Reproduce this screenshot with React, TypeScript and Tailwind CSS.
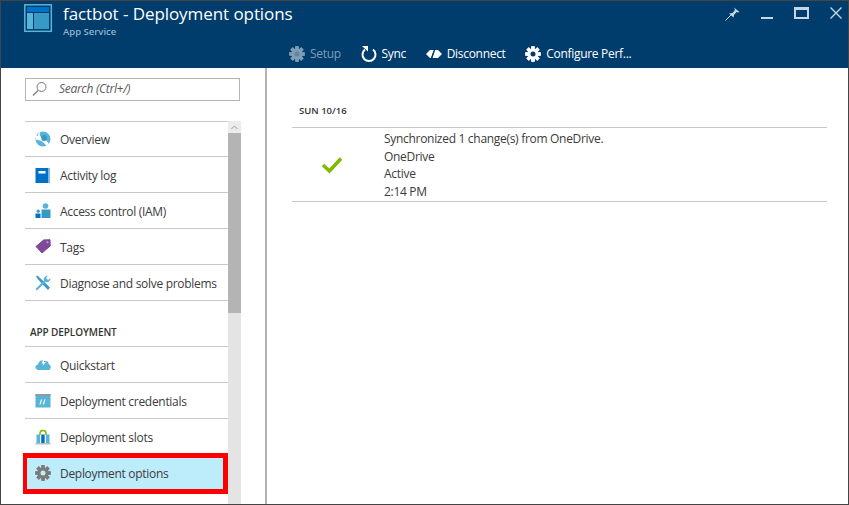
import type { ReactNode } from "react";

function Gear({ color, hole }: { color: string; hole: string }) {
  const teeth = [0, 45, 90, 135, 180, 225, 270, 315];
  return (
    <svg width="16" height="16" viewBox="0 0 16 16">
      {teeth.map((a) => (
        <rect key={a} x="6.300" y="0.300" width="3.400" height="15.400" fill={color} transform={`rotate(${a} 8 8)`} />
      ))}
      <circle cx="8" cy="8" r="5.600" fill={color} />
      <circle cx="8" cy="8" r="2.500" fill={hole} />
    </svg>
  );
}

const icons: Record<string, ReactNode> = {
  overview: (
    <svg width="16" height="16" viewBox="0 0 16 16">
      <circle cx="8" cy="8" r="7.500" fill="#59b4d9" />
      <path d="M0.500 5 C5 3.500 11 8 14 13 L11.500 15 C8.500 10.500 4 8 1 9Z" fill="#fff" />
      <circle cx="9" cy="7" r="3" fill="#3999c6" />
      <path d="M5.500 0.800 C4 4 5 6 7 8 L4 9.500 C2 7 2 3 5.500 0.800Z" fill="#fff" />
    </svg>
  ),
  log: (
    <svg width="16" height="16" viewBox="0 0 16 16">
      <rect x="0.500" y="1" width="14.500" height="15" fill="#0072c6" />
      <rect x="13" y="1" width="2" height="15" fill="#7fb9e3" />
      <rect x="3.500" y="4" width="7" height="2.500" fill="#fff" />
    </svg>
  ),
  iam: (
    <svg width="16" height="16" viewBox="0 0 16 16">
      <circle cx="10.500" cy="3" r="2.800" fill="#59b4d9" />
      <path d="M6.500 6.500 H15.500 V15 H6.500Z" fill="#3999c6" />
      <circle cx="3.200" cy="8.200" r="1.600" fill="#3999c6" />
      <path d="M0.500 10.500 H5.500 V15 H0.500Z" fill="#0072c6" />
    </svg>
  ),
  tags: (
    <svg width="16" height="16" viewBox="0 0 16 16">
      <path d="M8.500 1 L15 0.700 L15.200 7 L7 14 L1 7.500Z" fill="#804998" stroke="#804998" strokeLinejoin="round" />
      <circle cx="12.500" cy="3.200" r="1" fill="#c9a5d8" />
    </svg>
  ),
  wrench: (
    <svg width="16" height="16" viewBox="0 0 16 16">
      <path d="M1 1.500 L2.500 0.500 L5 3 L15 12.500 L13 15 L3.500 5 Z" fill="#3999c6" />
      <path d="M2 15.500 L0.500 14 L9.500 5 L11 6.500Z" fill="#59b4d9" />
      <path d="M9 6 C8 3.500 10 0.500 13 0.500 L11 3 L13 5 L15.500 3 C15.500 6 13 8 10.500 7Z" fill="#59b4d9" />
    </svg>
  ),
  cloud: (
    <svg width="16" height="16" viewBox="0 0 16 16">
      <path d="M3.500 13 C-0.500 13 -0.500 8 3 7.500 C3.500 4 7 2 10 4 C13 3.500 14 6 13.500 7 C16.800 8 16.500 13 13 13Z" fill="#59b4d9" />
      <path d="M9 1 L6.500 6.500 H8.500 L7.500 9 L11 5 H9Z" fill="#fff" />
    </svg>
  ),
  creds: (
    <svg width="16" height="16" viewBox="0 0 16 16">
      <rect x="0.500" y="1" width="15" height="13.500" fill="#59b4d9" />
      <rect x="0.500" y="1" width="15" height="2" fill="#8f9ba3" />
      <path d="M6 6.500 H7.200 L5.600 11.500 H4.400Z M9.300 6.500 H10.500 L8.900 11.500 H7.700Z" fill="#fff" />
    </svg>
  ),
  slots: (
    <svg width="16" height="16" viewBox="0 0 16 16">
      <path d="M5 6 V4 C5 0.500 11 0.500 11 4 V6" fill="none" stroke="#7fba00" strokeWidth="1.500" />
      <rect x="1.500" y="5.500" width="3.500" height="8.500" fill="#59b4d9" />
      <rect x="6.200" y="5.500" width="3.500" height="8.500" fill="#0072c6" />
      <rect x="11" y="5.500" width="3.500" height="8.500" fill="#59b4d9" />
      <rect x="0.500" y="14" width="15" height="1.500" fill="#b8bcbf" />
    </svg>
  ),
};

function Row({ icon, label, className }: { icon: string; label: string; className?: string }) {
  return (
    <div className={`flex items-center border-t border-[#c8c8c8] ${className ?? "h-9"}`}>
      <span className="ml-[10px] flex w-[25px] shrink-0">{icons[icon]}</span>
      <span className="pt-[2px]">{label}</span>
    </div>
  );
}

function Action({ icon, label, dim }: { icon: ReactNode; label: string; dim?: boolean }) {
  return (
    <div className={`flex items-center gap-[5px] ${dim ? "text-[#7f9db5]" : "text-white"}`}>
      {icon}
      <span>{label}</span>
    </div>
  );
}

export default function App() {
  return (
    <div className="flex h-[505px] w-[849px] flex-col overflow-hidden border border-[#444] bg-white font-['Open_Sans','Noto_Sans',sans-serif] text-[12px] tracking-[-0.3px] text-[#3b3b3b]">
      <header className="h-[67px] shrink-0 bg-[#003c6c]">
        <div className="flex h-[43px] pl-[23px] pt-[3px]">
          <svg width="29" height="29" viewBox="0 0 29 29" className="shrink-0">
            <rect x="0.800" y="0.800" width="26.500" height="26.500" fill="none" stroke="#59b4d9" strokeWidth="1.500" />
            <rect x="3" y="3" width="22" height="5" fill="#0072c6" />
            <rect x="3" y="9" width="6" height="16" fill="#59b4d9" />
            <rect x="10" y="9" width="15" height="16" fill="#3999c6" />
          </svg>
          <div className="ml-[10px]">
            <div className="mt-[-2px] text-[17px] leading-[24px] tracking-[-0.07px] text-white">factbot - Deployment options</div>
            <div className="text-[9.500px] font-semibold leading-[12px] tracking-normal text-[#8fb3cf]">App Service</div>
          </div>
          <div className="ml-auto mr-[6px] mt-[3px] flex items-start text-[#c7d6e3]">
            <svg width="15" height="14" viewBox="0 0 15 14" fill="currentColor">
              <path d="M9 0.500 L14.500 5 L13 5.500 L11.500 5 L9 8 L8.500 10.500 L4 6.500 L7.500 6 L10 3 Z" />
              <path d="M6 8 L0.500 13.500" stroke="currentColor" strokeWidth="1" />
            </svg>
            <div className="ml-[21px] mt-[10px] h-[2px] w-[12px] bg-current" />
            <div className="ml-[21px] h-[12px] w-[15px] border-[2px] border-t-[3px] border-current" />
            <svg className="ml-[21px]" width="12" height="12" viewBox="0 0 12 12">
              <path d="M0.500 0.500 L11.500 11.500 M11.500 0.500 L0.500 11.500" stroke="currentColor" strokeWidth="1.400" />
            </svg>
          </div>
        </div>
        <div className="flex h-[20px] items-center gap-[19.700px] pl-[288px] leading-[20px]">
          <Action dim label="Setup" icon={<Gear color="#7f9db5" hole="#5e87a6" />} />
          <Action
            label="Sync"
            icon={
              <svg width="16" height="18" viewBox="0 0 16 18">
                <path d="M4 4.500 A6.500 6.500 0 1 0 12 4.500" fill="none" stroke="#fff" strokeWidth="2" />
                <path d="M1 1 H7 V6.500Z" fill="#fff" />
              </svg>
            }
          />
          <Action
            label="Disconnect"
            icon={
              <svg width="16" height="12" viewBox="0 0 16 12">
                <path d="M0 6 L4 2 H8 L5 10 H4Z M9 2 H12 L16 6 L12 10 H6.500Z" fill="#fff" />
                <path d="M9 0.500 L5 11.500" stroke="#003c6c" strokeWidth="1.200" />
              </svg>
            }
          />
          <Action label="Configure Perf..." icon={<Gear color="#fff" hole="#003c6c" />} />
        </div>
      </header>

      <div className="flex min-h-0 flex-1">
        <aside className="h-full w-[266px] shrink-0 overflow-hidden border-r-2 border-[#b4b4b4] pl-[24px]">
          <div className="mt-[10px] flex h-[23px] w-[215px] items-center border border-[#b4b4b4] pb-[1px] pl-[6px] italic text-[#5a5a5a]">
            <svg width="16" height="16" viewBox="0 0 16 16" className="mr-[11px] shrink-0">
              <circle cx="9.500" cy="6" r="4.500" fill="none" stroke="#7a7a7a" />
              <path d="M6 9.500 L1 14.500" stroke="#7a7a7a" strokeWidth="1.200" />
            </svg>
            Search (Ctrl+/)
          </div>
          <div className="mt-[20px] flex w-[216px]">
            <div className="w-[203px] shrink-0">
              <Row icon="overview" label="Overview" className="h-[35px]" />
              <Row icon="log" label="Activity log" />
              <Row icon="iam" label="Access control (IAM)" />
              <Row icon="tags" label="Tags" />
              <Row icon="wrench" label="Diagnose and solve problems" />
              <div className="flex h-[46px] items-end border-t border-[#c8c8c8] pb-[6px] pl-[5px] text-[10px] font-semibold tracking-[-0.1px] text-[#333]">
                APP DEPLOYMENT
              </div>
              <Row icon="cloud" label="Quickstart" />
              <Row icon="creds" label="Deployment credentials" />
              <Row icon="slots" label="Deployment slots" />
              <div className="relative flex h-[36px] items-center border-t border-[#c8c8c8] bg-[#bdecfb]">
                <div className="absolute bottom-[-4px] left-[-2px] right-0 top-[-2px] border-y-[5px] border-l-[4px] border-r-[5px] border-[#ff0000]" />
                <span className="ml-[10px] flex w-[25px] shrink-0">
                  <Gear color="#7a7a7a" hole="#bdecfb" />
                </span>
                <span className="relative pt-[2px]">Deployment options</span>
              </div>
            </div>
            <div className="flex h-[400px] w-[13px] shrink-0 flex-col bg-[#e4e4e4]">
              <div className="flex h-[12px] items-center justify-center bg-[#ececec]">
                <svg width="7" height="5" viewBox="0 0 7 5">
                  <path d="M0.500 4 L3.500 1 L6.500 4" fill="none" stroke="#9a9a9a" />
                </svg>
              </div>
              <div className="h-[180px] bg-[#b4b4b4]" />
            </div>
          </div>
        </aside>

        <main className="min-w-0 flex-1 pl-[25px] pt-[36px]">
          <div className="pb-[10px] pl-[7px] text-[9.500px] font-semibold leading-[13px] tracking-normal text-[#333]">SUN 10/16</div>
          <div className="flex h-[75px] w-[535px] border-y border-[#c8c8c8]">
            <div className="flex w-[92px] shrink-0 items-center justify-center">
              <svg width="22" height="18" viewBox="0 0 22 18" className="ml-[-12px]">
                <path d="M2 9 L8.500 15 L20 2.500" fill="none" stroke="#7fba00" strokeWidth="3.500" />
              </svg>
            </div>
            <div className="pt-[2px] leading-[17.500px]">
              <div>Synchronized 1 change(s) from OneDrive.</div>
              <div>OneDrive</div>
              <div>Active</div>
              <div>2:14 PM</div>
            </div>
          </div>
        </main>
      </div>
    </div>
  );
}
